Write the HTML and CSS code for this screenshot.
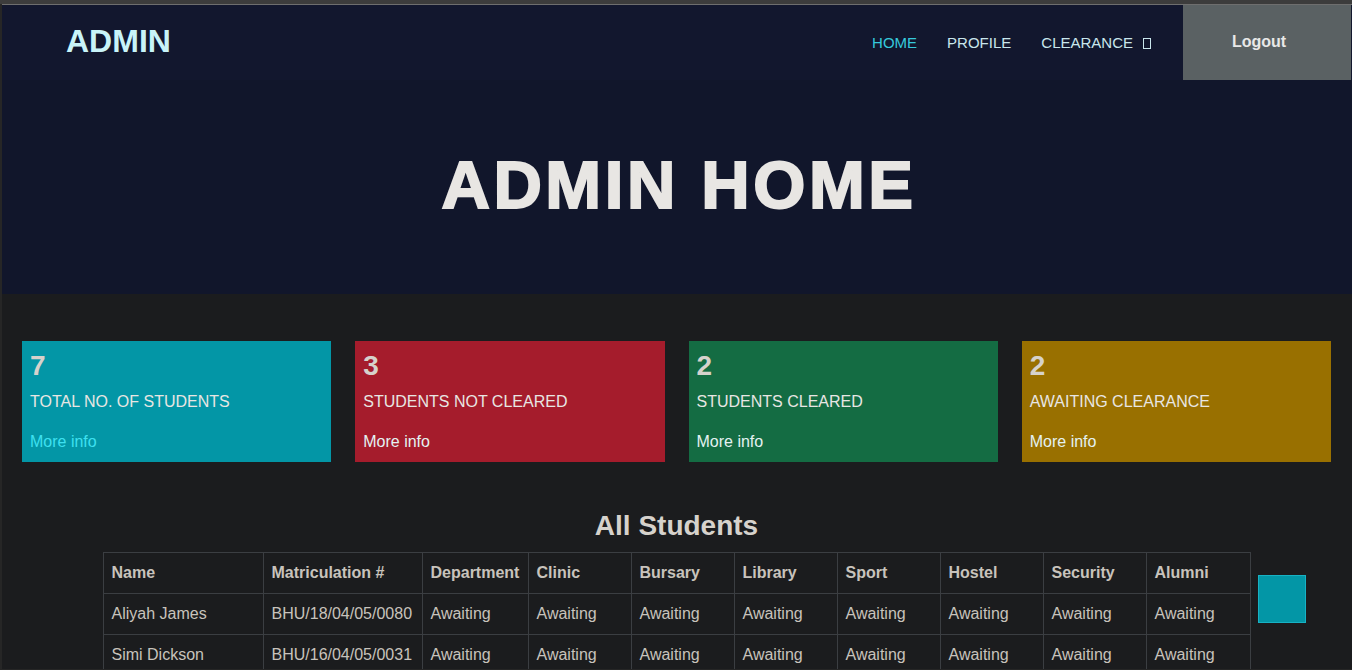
FILE: index.html
```html
<!DOCTYPE html>
<html lang="en">
<head>
<meta charset="utf-8">
<title>Admin Home</title>
<link rel="stylesheet" href="styles.css">
</head>
<body>
<div class="window">
  <header class="nav">
    <div class="brand">ADMIN</div>
    <nav class="links">
      <a class="link active" href="#">HOME</a>
      <a class="link" href="#">PROFILE</a>
      <a class="link" href="#">CLEARANCE <span class="tofu"></span></a>
    </nav>
    <a class="logout" href="#">Logout</a>
  </header>

  <section class="hero">
    <h1 class="hero-title">ADMIN HOME</h1>
  </section>

  <main class="content">
    <div class="cards">
      <div class="card teal">
        <div class="num">7</div>
        <div class="label">TOTAL NO. OF STUDENTS</div>
        <a class="more more-cyan" href="#">More info</a>
      </div>
      <div class="card red">
        <div class="num">3</div>
        <div class="label">STUDENTS NOT CLEARED</div>
        <a class="more" href="#">More info</a>
      </div>
      <div class="card green">
        <div class="num">2</div>
        <div class="label">STUDENTS CLEARED</div>
        <a class="more" href="#">More info</a>
      </div>
      <div class="card amber">
        <div class="num">2</div>
        <div class="label">AWAITING CLEARANCE</div>
        <a class="more" href="#">More info</a>
      </div>
    </div>

    <h2 class="section-title">All Students</h2>

    <div class="table-row">
      <div class="table-wrap">
        <table class="students">
          <colgroup>
            <col class="w-name"><col class="w-mat"><col class="w-dept">
            <col class="w-std"><col class="w-std"><col class="w-std"><col class="w-std">
            <col class="w-std"><col class="w-std"><col class="w-last">
          </colgroup>
          <thead>
            <tr>
              <th>Name</th><th>Matriculation #</th><th>Department</th><th>Clinic</th><th>Bursary</th>
              <th>Library</th><th>Sport</th><th>Hostel</th><th>Security</th><th>Alumni</th>
            </tr>
          </thead>
          <tbody>
            <tr>
              <td>Aliyah James</td><td>BHU/18/04/05/0080</td><td>Awaiting</td><td>Awaiting</td><td>Awaiting</td>
              <td>Awaiting</td><td>Awaiting</td><td>Awaiting</td><td>Awaiting</td><td>Awaiting</td>
            </tr>
            <tr>
              <td>Simi Dickson</td><td>BHU/16/04/05/0031</td><td>Awaiting</td><td>Awaiting</td><td>Awaiting</td>
              <td>Awaiting</td><td>Awaiting</td><td>Awaiting</td><td>Awaiting</td><td>Awaiting</td>
            </tr>
          </tbody>
        </table>
        <a class="to-top" href="#" aria-label="Back to top"></a>
      </div>
    </div>
  </main>
</div>
</body>
</html>
```

FILE: styles.css
```css
* { box-sizing: border-box; }

html { background: #262626; }

body {
  margin: 0;
  border-top: 4px solid #3c3c3c;
  padding-left: 2px;
  background: #262626;
  font-family: "Liberation Sans", Arial, sans-serif;
  overflow: hidden;
  height: 670px;
}

.window {
  border-top: 1px solid #6e6e6e;
  background: #1b1c1e;
  height: 665px;
  overflow: hidden;
}

a { text-decoration: none; }

/* NAV */
.nav {
  display: flex;
  align-items: center;
  height: 75px;
  background: #12172e;
  padding-right: 1px;
}

.brand {
  margin-left: 64px;
  font-size: 32px;
  font-weight: bold;
  color: #c8f4f8;
  flex: 1;
  padding-bottom: 2px;
}

.links {
  display: flex;
  align-items: center;
  margin-right: 17px;
}

.link {
  padding: 0 15px;
  font-size: 15px;
  color: #c9e6ec;
  line-height: 20px;
  display: flex;
  align-items: center;
}

.link.active { color: #36c9dc; }

.tofu {
  display: inline-block;
  width: 8px;
  height: 11px;
  border: 1px solid #c9e6ec;
  margin-left: 10px;
  margin-top: 2px;
}

.logout {
  align-self: stretch;
  width: 168px;
  background: #5a6163;
  color: #e8e8e8;
  font-size: 16px;
  font-weight: bold;
  display: flex;
  align-items: center;
  justify-content: center;
  padding: 0 16px 2px 0;
}

/* HERO */
.hero {
  height: 214px;
  background: #11162b;
  display: flex;
  align-items: center;
  justify-content: center;
}

.hero-title {
  margin: 0;
  font-size: 67px;
  font-weight: bold;
  letter-spacing: 3.6px;
  color: #e8e6e3;
  -webkit-text-stroke: 2px #e8e6e3;
  padding: 0 0 6px 4px;
}

/* CARDS */
.content {
  padding: 47px 21px 0 20px;
}

.cards {
  display: grid;
  grid-template-columns: repeat(4, 1fr);
  gap: 24px;
}

.card {
  height: 121px;
  padding: 8px 8px 8px 8px;
  display: flex;
  flex-direction: column;
}

.teal { background: #0396a6; }
.red { background: #a51c2c; }
.green { background: #146c43; }
.amber { background: #997000; }

.num {
  font-size: 28px;
  font-weight: bold;
  line-height: 34px;
  color: #d6d2cc;
}

.label {
  margin-top: 7px;
  font-size: 16px;
  line-height: 24px;
  color: #e8e6e3;
}

.more {
  margin-top: 16px;
  font-size: 16px;
  line-height: 24px;
  color: #e4f2f2;
}

.more-cyan { color: #3ee0f0; }

/* TABLE */
.section-title {
  margin: 47px 0 9px;
  text-align: center;
  font-size: 28px;
  line-height: 34px;
  font-weight: bold;
  color: #d6d2cc;
}

.table-row {
  display: flex;
  justify-content: center;
}

.table-wrap {
  position: relative;
}

.students {
  border-collapse: collapse;
  table-layout: fixed;
  width: 1147px;
  font-size: 16px;
  line-height: 24px;
  color: #c8c3bc;
}

.w-name { width: 160px; }
.w-mat { width: 159px; }
.w-dept { width: 106px; }
.w-std { width: 103px; }
.w-last { width: 104px; }

.students th,
.students td {
  border: 1px solid #3b3e42;
  padding: 8px 8px;
  text-align: left;
  white-space: nowrap;
  overflow: hidden;
}

.students th { font-weight: bold; }

.to-top {
  position: absolute;
  left: calc(100% + 7px);
  top: 23px;
  width: 48px;
  height: 48px;
  background: #0396a6;
  border: 1px solid #17b2c4;
}
```
